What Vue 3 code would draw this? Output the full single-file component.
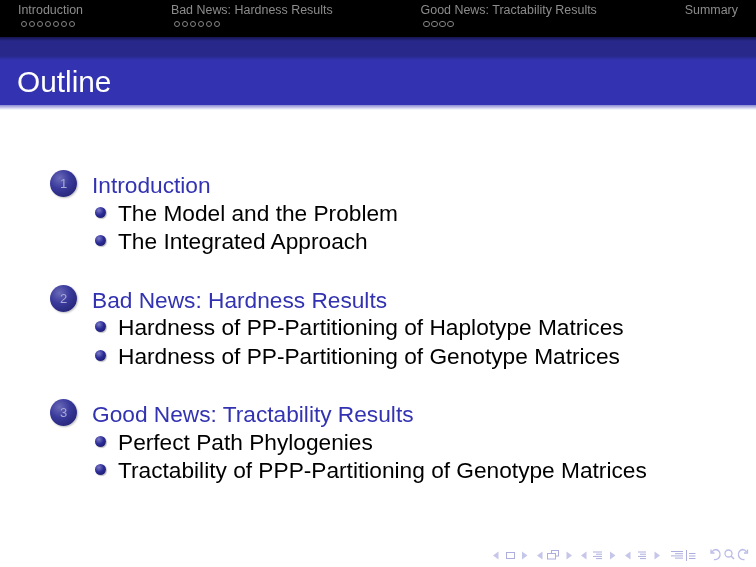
<script setup>
const nav = [
  { title: 'Introduction', dots: 7 },
  { title: 'Bad News: Hardness Results', dots: 6 },
  { title: 'Good News: Tractability Results', dots: 4 },
  { title: 'Summary', dots: 0 }
]
const sections = [
  { n: 1, title: 'Introduction', items: ['The Model and the Problem', 'The Integrated Approach'] },
  { n: 2, title: 'Bad News: Hardness Results', items: ['Hardness of PP-Partitioning of Haplotype Matrices', 'Hardness of PP-Partitioning of Genotype Matrices'] },
  { n: 3, title: 'Good News: Tractability Results', items: ['Perfect Path Phylogenies', 'Tractability of PPP-Partitioning of Genotype Matrices'] }
]
</script>

<template>
  <div class="slide">
    <nav class="topnav">
      <div v-for="s in nav" :key="s.title" class="navsec">
        <div class="navtitle">{{ s.title }}</div>
        <div class="dots"><i v-for="d in s.dots" :key="d" class="dot"></i></div>
      </div>
    </nav>
    <div class="band"></div>
    <header class="titlebar">Outline</header>
    <div class="shade"></div>
    <main class="toc">
      <section v-for="s in sections" :key="s.n" class="sec">
        <div class="head"><span class="ball">{{ s.n }}</span><span class="headtxt">{{ s.title }}</span></div>
        <div v-for="it in s.items" :key="it" class="item"><span class="bullet"></span>{{ it }}</div>
      </section>
    </main>
    <footer class="beamer">
      <svg width="266" height="22" viewBox="490 545 266 22" fill="none" stroke="#aeaede" stroke-width="1">
        <g fill="#c6c6ea" stroke="none">
          <path d="M493 555.500l5.500-4v8z"/><path d="M527.500 555.500l-5.500-4v8z"/>
          <path d="M537 555.500l5.500-4v8z"/><path d="M572 555.500l-5.500-4v8z"/>
          <path d="M581 555.500l5.500-4v8z"/><path d="M615.500 555.500l-5.500-4v8z"/>
          <path d="M625 555.500l5.500-4v8z"/><path d="M660 555.500l-5.500-4v8z"/>
        </g>
        <rect x="506.500" y="552.500" width="8" height="6"/>
        <rect x="551.500" y="550.500" width="7" height="5.500"/>
        <rect x="547.500" y="553.500" width="8" height="5.500" fill="#fff"/>
        <path d="M593 552h9M596 554.200h6M593 556.400h9M596 558.600h6M638 552h8M640 554.200h6M638 556.400h8M640 558.600h6M671 551.500h12M675 553.700h8M671 555.900h12M675 558.100h8"/>
        <path d="M686.500 550v11M689 553.500h6.500M689 556h6.500M689 558.500h6.500"/>
        <path d="M714 559.500a5 5 0 1 0 2-10 5 5 0 0 0-4 2.500M711 549.500v3.500h3.500" stroke="#bcbce8" stroke-width="1.300"/>
        <circle cx="728.500" cy="553.500" r="3.500" stroke="#bcbce8" stroke-width="1.300"/><path d="M731 556l3 3" stroke="#bcbce8" stroke-width="1.600"/>
        <path d="M744.500 559.500a5 5 0 1 1-2-10 5 5 0 0 1 4 2.500M747.500 549.500v3.500h-3.500" stroke="#bcbce8" stroke-width="1.300"/>
      </svg>
    </footer>
  </div>
</template>

<style>
html, body { margin: 0; background: #fff; overflow: hidden; }
</style>

<style scoped>
.slide { width: 756px; height: 567px; display: flex; flex-direction: column; font-family: "Liberation Sans", Arial, sans-serif; overflow: hidden; background: #fff; filter: blur(0.45px); }
.topnav { height: 37px; flex: none; background: #000; display: flex; justify-content: space-between; padding: 3px 18px 0; box-sizing: border-box; color: #8c8c8c; }
.navtitle { font-size: 12.450px; line-height: 14px; white-space: nowrap; }
.dots { display: flex; margin: 3px 0 0 2px; height: 8px; }
.dot { width: 8px; height: 8px; display: flex; }
.dot::before { content: ""; width: 6.500px; height: 6.500px; border: 1px solid #858585; border-radius: 50%; box-sizing: border-box; margin: .750px; }
.band { height: 23px; flex: none; background: linear-gradient(#15154f 0, #27288a 4px, #27288a 19px, #3333b2 23px); }
.titlebar { height: 45px; flex: none; background: #3333b2; color: #fff; font-size: 29.800px; line-height: 43px; padding-left: 17px; box-sizing: border-box; }
.shade { height: 5px; flex: none; background: linear-gradient(#8a8ad4, #fff); }
.toc { padding: 61px 0 0 50px; display: flex; flex-direction: column; gap: 29.750px; }
.head { display: flex; align-items: center; height: 28.250px; }
.ball { width: 27px; height: 27px; border-radius: 50%; flex: none; display: flex; align-items: center; justify-content: center; margin: 0 15px 3px 0; font-size: 13px; color: #a9a9d6; background: radial-gradient(circle at 35% 30%, #6a6ab8 0, #3a3a9c 40%, #1c1c68 100%); box-shadow: 1px 1px 2px rgba(0,0,0,.25); }
.headtxt { font-size: 22.700px; color: #3333b2; line-height: 28px; white-space: nowrap; }
.item { display: flex; align-items: center; height: 28.250px; font-size: 22.700px; color: #000; padding-left: 45px; white-space: nowrap; }
.bullet { width: 11px; height: 11px; border-radius: 50%; margin: 0 12px 2px 0; flex: none; background: radial-gradient(circle at 35% 30%, #7a7ac4 0, #2c2c98 45%, #14145a 100%); box-shadow: 1px 1px 1px rgba(0,0,0,.25); }
.beamer { margin-top: auto; height: 22px; display: flex; justify-content: flex-end; flex: none; }
.beamer svg { display: block; }
</style>
